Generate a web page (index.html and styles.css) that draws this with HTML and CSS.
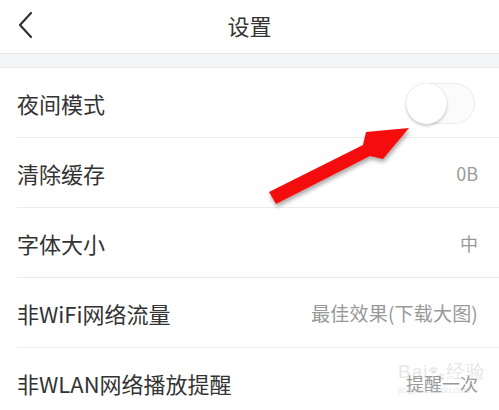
FILE: index.html
```html
<!DOCTYPE html>
<html lang="zh">
<head>
<meta charset="utf-8">
<title>设置</title>
<link rel="stylesheet" href="styles.css">
</head>
<body>
<div class="page">
  <header class="header">
    <svg class="back" width="16" height="28" viewBox="0 0 16 28"><polyline points="14,2 3,14 14,26" fill="none" stroke="#333" stroke-width="2.2" stroke-linecap="round" stroke-linejoin="round"/></svg>
    <h1 class="title">设置</h1>
  </header>
  <div class="band"></div>
  <ul class="list">
    <li class="row"><span class="label">夜间模式</span><span class="switch"><span class="knob"></span></span></li>
    <li class="row"><span class="label">清除缓存</span><span class="value">0B</span></li>
    <li class="row"><span class="label">字体大小</span><span class="value">中</span></li>
    <li class="row"><span class="label">非WiFi网络流量</span><span class="value wide">最佳效果(下载大图)</span></li>
    <li class="row"><span class="label">非WLAN网络播放提醒</span><span class="value">提醒一次</span></li>
  </ul>
  <svg class="arrow" width="160" height="100" viewBox="260 115 160 100">
    <defs>
      <filter id="sh" x="-20%" y="-20%" width="140%" height="140%">
        <feDropShadow dx="1" dy="3" stdDeviation="2" flood-color="#000" flood-opacity="0.35"/>
      </filter>
    </defs>
    <polygon points="269,192 363,145 366,132 409,128 383,159 370,156 276,204" fill="#f50d0d" filter="url(#sh)"/>
  </svg>
  <div class="watermark"><span class="wm-big">Bai<span class="paw">🐾</span>经验</span><span class="wm-small">jingyan.baidu.com</span></div>
</div>
</body>
</html>
```

FILE: styles.css
```css
* { box-sizing: border-box; margin: 0; padding: 0; }
html, body { width: 499px; height: 410px; overflow: hidden; background: #fff; }
body { font-family: "Noto Sans CJK SC", "Noto Sans", sans-serif; color: #333; }
.page { position: relative; width: 499px; height: 410px; overflow: hidden; }
.header {
  height: 54px;
  border-bottom: 1px solid #e6e6e6;
  display: flex;
  align-items: center;
  justify-content: center;
  position: relative;
}
.back { position: absolute; left: 17px; top: 11px; }
.title { font-size: 22px; font-weight: normal; color: #333; line-height: 1; margin-top: -3px; }
.band { height: 14px; background: #f4f5f7; border-bottom: 1px solid #ebebeb; }
.list { list-style: none; padding-left: 17px; }
.row {
  height: 70px;
  border-bottom: 1px solid #ebebeb;
  display: flex;
  align-items: center;
  justify-content: space-between;
  padding-right: 21px;
}
.label { font-size: 22px; color: #333; line-height: 1; }
.value { font-size: 18px; color: #999; line-height: 1; }
.value.wide { font-size: 19px; letter-spacing: 0.2px; }
.switch {
  width: 69px; height: 41px;
  border-radius: 21px;
  border: 1px solid #ececec;
  background: #fbfbfb;
  position: relative;
  margin-right: 3px;
  margin-top: 1px;
}
.knob {
  position: absolute; left: -1px; top: -1px;
  width: 41px; height: 41px; border-radius: 50%;
  background: #fff;
  box-shadow: 0 2px 3px rgba(0,0,0,0.18), 0 0 1px rgba(0,0,0,0.2);
}
.arrow { position: absolute; left: 260px; top: 115px; }
.watermark {
  position: absolute; left: 398px; top: 362px;
  display: flex; flex-direction: column; align-items: flex-start;
  color: rgba(200,200,200,0.45); pointer-events: none;
}
.wm-big { font-family: "Liberation Sans", sans-serif; font-size: 19px; line-height: 1; letter-spacing: 1px; }
.paw { font-size: 14px; opacity: 0.4; filter: grayscale(1); }
.wm-small { font-family: "Liberation Sans", sans-serif; font-size: 9px; margin-top: 4px; }
```
